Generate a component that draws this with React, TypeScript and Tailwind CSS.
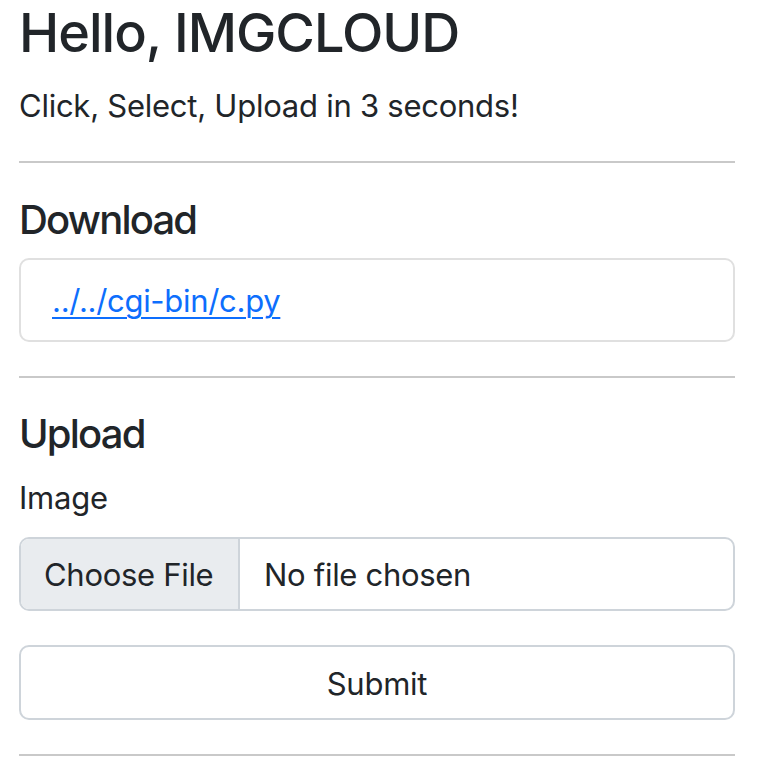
export default function App() {
  return (
    <div className="min-h-screen bg-white font-['Inter',sans-serif] text-[#212529]">
      <div className="ml-[19px] flex w-[716px] flex-col">
        <h1 className="text-[54px] font-medium leading-[65px] tracking-[-1px]">Hello, IMGCLOUD</h1>
        <p className="mt-[21px] text-[31px] leading-[40px] tracking-[-0.25px]">Click, Select, Upload in 3 seconds!</p>

        <hr className="mt-[35px] border-t-2 border-[#c9c9c9]" />

        <h2 className="mt-[33px] text-[40px] font-medium leading-[48px] tracking-[-1.8px]">Download</h2>
        <div className="mt-[14px] flex h-[84px] items-center rounded-[10px] border-2 border-[#e0e0e0] px-[31px] pt-[2px]">
          <a
            href="#"
            className="text-[31px] leading-[40px] tracking-[-0.3px] text-[#0d6efd] underline decoration-2 underline-offset-[5px]"
          >
            ../../cgi-bin/c.py
          </a>
        </div>

        <hr className="mt-[34px] border-t-2 border-[#c9c9c9]" />

        <h2 className="mt-[32px] text-[40px] font-medium leading-[48px] tracking-[-1.8px]">Upload</h2>
        <label className="mt-[20px] text-[31px] leading-[40px] tracking-[-0.25px]">Image</label>
        <div className="mt-[19px] flex h-[74px] overflow-hidden rounded-[10px] border-2 border-[#ced4da] text-[31px] tracking-[-0.3px]">
          <div className="flex w-[219px] items-center border-r-2 border-[#ced4da] bg-[#e9ecef] pl-[23px] pt-[3px]">
            Choose File
          </div>
          <div className="flex items-center pl-[24px] pt-[3px]">No file chosen</div>
        </div>
        <button
          type="button"
          className="mt-[34px] flex h-[75px] items-center justify-center rounded-[10px] border-2 border-[#ced4da] bg-white pt-[3px] text-[31px] tracking-[-0.25px]"
        >
          Submit
        </button>

        <hr className="mt-[34px] border-t-2 border-[#c9c9c9]" />
      </div>
    </div>
  );
}
